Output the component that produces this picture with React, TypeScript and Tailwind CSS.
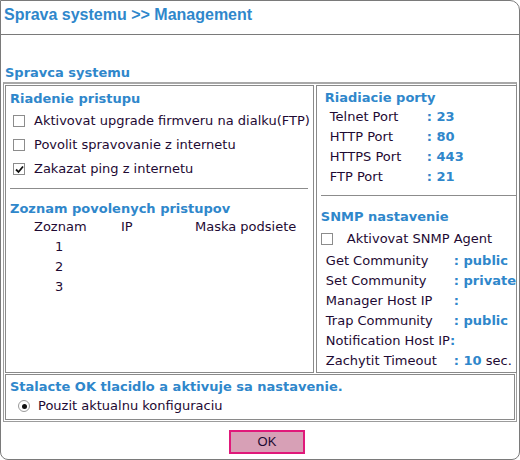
import React from 'react';

const Check = ({ checked }: { checked?: boolean }) => (
  <span className="inline-flex w-[12px] h-[12px] border border-[#8c8c8c] bg-white items-center justify-center shrink-0">
    {checked && (
      <svg width="9" height="9" viewBox="0 0 9 9">
        <path d="M1 4.5 L3.5 7 L8 1.5" stroke="#111" strokeWidth="1.8" fill="none" />
      </svg>
    )}
  </span>
);

const Radio = () => (
  <span className="inline-flex w-[12px] h-[12px] rounded-full border border-[#9a9a9a] bg-white items-center justify-center shrink-0">
    <span className="w-[5px] h-[5px] rounded-full bg-[#111]" />
  </span>
);

const ports = [
  ['Telnet Port', '23'],
  ['HTTP Port', '80'],
  ['HTTPS Port', '443'],
  ['FTP Port', '21'],
];

const snmp: [string, string, string?][] = [
  ['Get Community', 'public'],
  ['Set Community', 'private'],
  ['Manager Host IP', ''],
  ['Trap Community', 'public'],
  ['Notification Host IP', ''],
  ['Zachytit Timeout', '10', ' sec.'],
];

export default function App() {
  return (
    <div className="w-[520px] h-[460px] bg-white text-[13px] text-[#1e0a33] font-['DejaVu_Sans',Verdana,sans-serif]">
      <div className="w-[520px] h-[460px] border border-[#7a7a7a] rounded-tr-[10px] rounded-b-[8px] flex flex-col">
        {/* header */}
        <div className="h-[34px] border-b border-[#7a7a7a] px-[3px] pt-[4px]">
          <h1 className="font-['Liberation_Sans',Arial,sans-serif] font-bold text-[16px] text-[#2f87cb] leading-[20px]">
            Sprava systemu &gt;&gt; Management
          </h1>
        </div>

        <div className="px-[2px] pt-[29px]">
          <h2 className="font-bold text-[13px] text-[#2f87cb] leading-[17px] pl-[2px] pb-[1px]">Spravca systemu</h2>

          {/* main table */}
          <div className="border border-[#9c9c9c] border-t-2 border-t-[#a8a8a8] p-[1px]">
            <div className="flex">
              {/* left cell */}
              <div className="w-[313px] h-[288px] border border-[#8a8a8a] pl-[4px] pr-[3px] whitespace-nowrap">
                <h3 className="font-bold text-[#2f87cb] leading-[17px] pt-[4px]">Riadenie pristupu</h3>
                <div className="flex flex-col pt-[2px]">
                  {[
                    ['Aktivovat upgrade firmveru na dialku(FTP)', false],
                    ['Povolit spravovanie z internetu', false],
                    ['Zakazat ping z internetu', true],
                  ].map(([t, c]) => (
                    <label key={t as string} className="flex items-center gap-[9px] h-[24px] pl-[3px]">
                      <Check checked={c as boolean} />
                      <span>{t as string}</span>
                    </label>
                  ))}
                </div>
                <div className="border-t border-[#8c8c8c] mt-[7px] mr-[2px]" />
                <h3 className="font-bold text-[#2f87cb] leading-[17px] pt-[11px]">Zoznam povolenych pristupov</h3>
                <div className="grid grid-cols-[87px_74px_1fr] pl-[24px] leading-[20px]">
                  <span>Zoznam</span>
                  <span>IP</span>
                  <span>Maska podsiete</span>
                  {['1', '2', '3'].map((n) => (
                    <React.Fragment key={n}>
                      <span className="pl-[21px]">{n}</span>
                      <span />
                      <span />
                    </React.Fragment>
                  ))}
                </div>
              </div>

              {/* right cell */}
              <div className="flex-1 h-[288px] border border-[#8a8a8a] ml-[2px] pl-[4px] whitespace-nowrap">
                <div className="border-b border-[#8c8c8c] pb-[8px] pl-[4px]">
                  <h3 className="font-bold text-[#2f87cb] leading-[17px] pt-[3px]">Riadiacie porty</h3>
                  <div className="grid grid-cols-[97px_1fr] pl-[5px] leading-[20px] pt-[1px]">
                    {ports.map(([l, v]) => (
                      <React.Fragment key={l}>
                        <span>{l}</span>
                        <span className="font-bold text-[#2f87cb]">: {v}</span>
                      </React.Fragment>
                    ))}
                  </div>
                </div>
                <h3 className="font-bold text-[#2f87cb] leading-[17px] pt-[12px]">SNMP nastavenie</h3>
                <label className="flex items-center gap-[14px] h-[24px] mt-[2px]">
                  <Check />
                  <span>Aktivovat SNMP Agent</span>
                </label>
                <div className="grid grid-cols-[128px_1fr] pl-[5px] leading-[20px]">
                  {snmp.map(([l, v, s]) =>
                    l === 'Notification Host IP' ? (
                      <span key={l} className="col-span-2">
                        {l}
                        <span className="font-bold text-[#2f87cb]">:</span>
                      </span>
                    ) : (
                      <React.Fragment key={l}>
                        <span>{l}</span>
                        <span>
                          <span className="font-bold text-[#2f87cb]">:{v ? ' ' + v : ''}</span>
                          {s}
                        </span>
                      </React.Fragment>
                    )
                  )}
                </div>
              </div>
            </div>

            {/* bottom row */}
            <div className="border border-[#8a8a8a] mt-[1px] h-[46px] pl-[4px]">
              <h3 className="font-bold text-[#2f87cb] leading-[17px] pt-[3px]">Stalacte OK tlacidlo a aktivuje sa nastavenie.</h3>
              <label className="flex items-center gap-[8px] h-[22px] pl-[8px]">
                <Radio />
                <span>Pouzit aktualnu konfiguraciu</span>
              </label>
            </div>
          </div>
        </div>

        <div className="flex justify-center pt-[8px]">
          <button className="w-[76px] h-[24px] bg-[#d7a0b6] border-2 border-[#e0197a] text-[13px] font-['Liberation_Sans',Arial,sans-serif] text-[#1e0a33] ml-[14px]">
            OK
          </button>
        </div>
      </div>
    </div>
  );
}
